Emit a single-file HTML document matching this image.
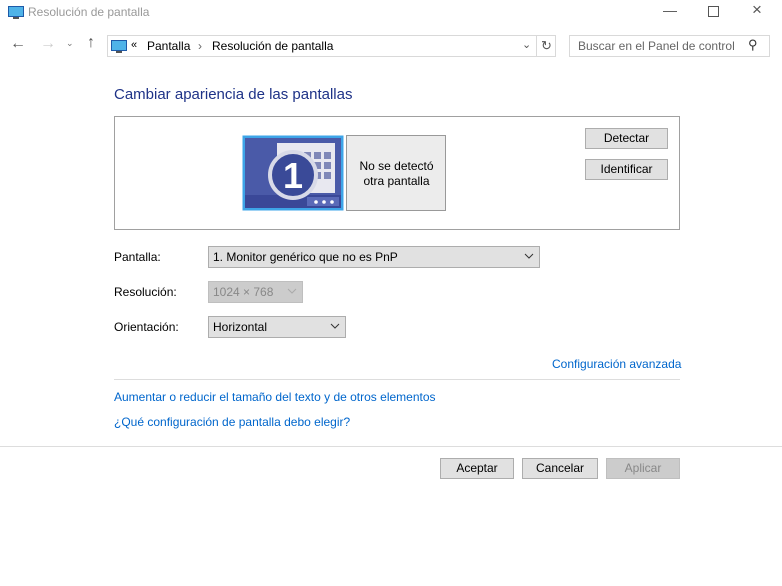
<!DOCTYPE html>
<html><head><style>
*{margin:0;padding:0;box-sizing:border-box}
body{width:782px;height:586px;background:#fff;font-family:"Liberation Sans",sans-serif;font-size:12px;color:#000;position:relative;overflow:hidden}
.a{position:absolute}
.btn{position:absolute;background:#e1e1e1;border:1px solid #adadad;text-align:center;line-height:19px;font-size:12px}
.link{color:#0066cc;position:absolute;font-size:12px}
.sel{position:absolute;background:#e1e1e1;border:1px solid #adadad;height:22px;line-height:20px;padding-left:4px}
.chev{position:absolute;right:4px;top:3px}
</style></head><body>
<svg class="a" style="left:8px;top:6px" width="16" height="14"><rect x="0.5" y="0.5" width="15" height="10" fill="#4fb3e8" stroke="#1e5aa8"/><rect x="5" y="11" width="6" height="2" fill="#555"/></svg>
<div class="a" style="left:28px;top:5px;color:#999;font-size:12px">Resolución de pantalla</div>
<div class="a" style="left:663px;top:2px;color:#555;font-size:14px">—</div>
<div class="a" style="left:708px;top:6px;width:11px;height:11px;border:1px solid #555"></div>
<div class="a" style="left:752px;top:0px;color:#555;font-size:17px">×</div>
<div class="a" style="left:10px;top:35px;font-size:16px;color:#555">←</div>
<div class="a" style="left:40px;top:35px;font-size:16px;color:#ccc">→</div>
<div class="a" style="left:66px;top:38px;font-size:9px;color:#777">⌄</div>
<div class="a" style="left:87px;top:34px;font-size:16px;color:#555">↑</div>
<div class="a" style="left:107px;top:35px;width:449px;height:22px;border:1px solid #d9d9d9"></div>
<div class="a" style="left:536px;top:35px;width:1px;height:22px;background:#d9d9d9"></div>
<svg class="a" style="left:111px;top:40px" width="16" height="13"><rect x="0.5" y="0.5" width="15" height="10" fill="#4fb3e8" stroke="#1e5aa8"/><rect x="5" y="11" width="6" height="2" fill="#555"/></svg>
<div class="a" style="left:131px;top:39px;font-size:11px">«</div>
<div class="a" style="left:147px;top:39px">Pantalla</div>
<div class="a" style="left:198px;top:39px;color:#666">›</div>
<div class="a" style="left:212px;top:39px">Resolución de pantalla</div>
<div class="a" style="left:522px;top:38px;color:#555;font-size:11px">⌄</div>
<div class="a" style="left:541px;top:38px;color:#555;font-size:13px">↻</div>
<div class="a" style="left:569px;top:35px;width:201px;height:22px;border:1px solid #d9d9d9"></div>
<div class="a" style="left:578px;top:39px;color:#666">Buscar en el Panel de control</div>
<div class="a" style="left:748px;top:37px;color:#333;font-size:13px">⚲</div>
<div class="a" style="left:114px;top:86px;color:#1e3287;font-size:15px">Cambiar apariencia de las pantallas</div>
<div class="a" style="left:114px;top:116px;width:566px;height:114px;border:1px solid #a0a0a0"></div>
<svg class="a" style="left:242px;top:135px" width="204" height="77">
<rect x="0.5" y="0.5" width="101" height="75" fill="#3da5e8"/>
<rect x="3" y="3" width="96" height="70" fill="#4a5aa8"/>
<rect x="3" y="60" width="96" height="13" fill="#3a4898"/>
<rect x="65" y="62" width="32" height="9" fill="#5a6ab8"/>
<circle cx="74" cy="67" r="1.8" fill="#fff"/><circle cx="82" cy="67" r="1.8" fill="#fff"/><circle cx="90" cy="67" r="1.8" fill="#fff"/>
<rect x="35" y="8" width="58" height="50" fill="#e8e8f0"/>
<g fill="#8088b8"><rect x="62" y="17" width="7" height="7"/><rect x="72" y="17" width="7" height="7"/><rect x="82" y="17" width="7" height="7"/><rect x="62" y="27" width="7" height="7"/><rect x="72" y="27" width="7" height="7"/><rect x="82" y="27" width="7" height="7"/><rect x="62" y="37" width="7" height="7"/><rect x="72" y="37" width="7" height="7"/><rect x="82" y="37" width="7" height="7"/></g>
<circle cx="51" cy="40" r="23" fill="#3a4a98" stroke="#d8dae8" stroke-width="4"/>
<text x="51" y="53" font-family="Liberation Sans" font-weight="bold" font-size="36" fill="#fff" text-anchor="middle">1</text>
<rect x="104.5" y="0.5" width="99" height="75" fill="#ececec" stroke="#999"/>
</svg>
<div class="a" style="left:347px;top:159px;width:99px;text-align:center;line-height:15px">No se detectó<br>otra pantalla</div>
<div class="btn" style="left:585px;top:128px;width:83px;height:21px">Detectar</div>
<div class="btn" style="left:585px;top:159px;width:83px;height:21px">Identificar</div>
<div class="a" style="left:114px;top:250px">Pantalla:</div>
<div class="sel" style="left:208px;top:246px;width:332px">1. Monitor genérico que no es PnP<svg class="chev" width="12" height="12" viewBox="0 0 12 12"><path d="M2 4l4 4 4-4" stroke="#333" fill="none"/></svg></div>
<div class="a" style="left:114px;top:285px">Resolución:</div>
<div class="sel" style="left:208px;top:281px;width:95px;background:#ccc;border-color:#bfbfbf;color:#888">1024 × 768<svg class="chev" width="12" height="12" viewBox="0 0 12 12"><path d="M2 4l4 4 4-4" stroke="#aaa" fill="none"/></svg></div>
<div class="a" style="left:114px;top:320px">Orientación:</div>
<div class="sel" style="left:208px;top:316px;width:138px">Horizontal<svg class="chev" width="12" height="12" viewBox="0 0 12 12"><path d="M2 4l4 4 4-4" stroke="#333" fill="none"/></svg></div>
<div class="link" style="left:552px;top:357px">Configuración avanzada</div>
<div class="a" style="left:114px;top:379px;width:566px;height:1px;background:#ddd"></div>
<div class="link" style="left:114px;top:390px">Aumentar o reducir el tamaño del texto y de otros elementos</div>
<div class="link" style="left:114px;top:415px">¿Qué configuración de pantalla debo elegir?</div>
<div class="a" style="left:0;top:446px;width:782px;height:1px;background:#ddd"></div>
<div class="btn" style="left:440px;top:458px;width:74px;height:21px">Aceptar</div>
<div class="btn" style="left:522px;top:458px;width:76px;height:21px">Cancelar</div>
<div class="btn" style="left:606px;top:458px;width:74px;height:21px;background:#ccc;border-color:#bfbfbf;color:#888">Aplicar</div>
</body></html>
